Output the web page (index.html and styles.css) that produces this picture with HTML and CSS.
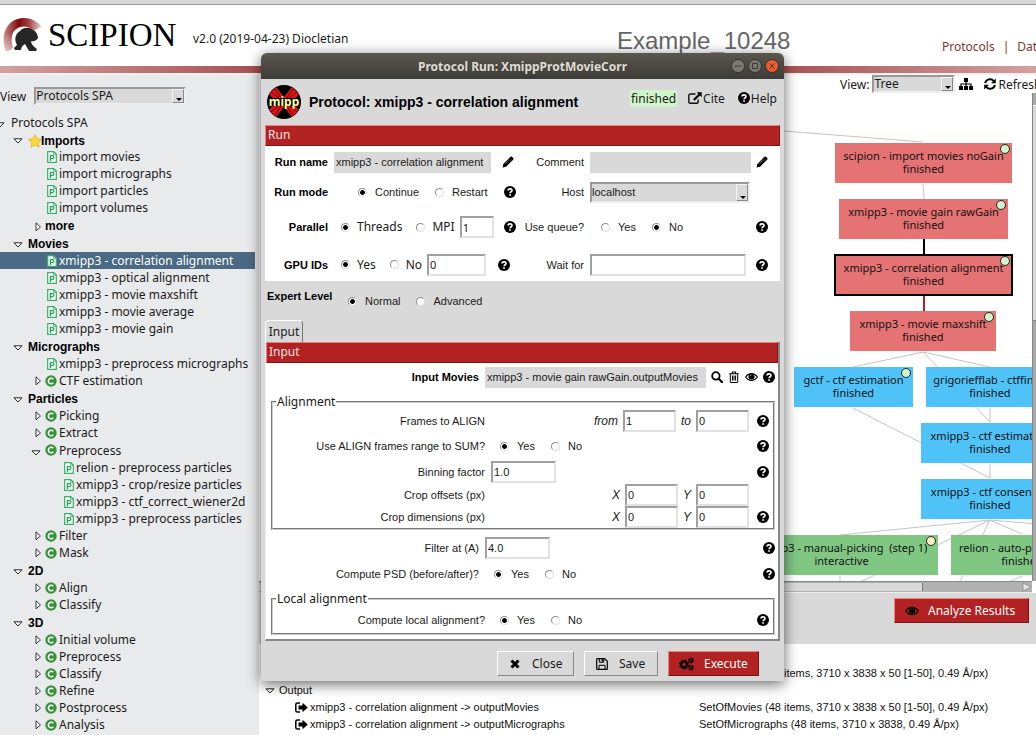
FILE: index.html
```html
<!DOCTYPE html>
<html lang="en">
<head>
<meta charset="utf-8">
<title>Scipion - Example_10248</title>
<link rel="stylesheet" href="styles.css">
</head>
<body>
<svg class="defs" aria-hidden="true">
  <defs>
    <linearGradient id="crest" x1="0" y1="0" x2="1" y2="0"><stop offset="0" stop-color="#c98a8a"/><stop offset=".4" stop-color="#7d0a0a"/><stop offset=".65" stop-color="#a03c3c"/><stop offset="1" stop-color="#ecd0d0"/></linearGradient>
    <linearGradient id="crestfade" x1="0" y1="0" x2="0" y2="1"><stop offset=".45" stop-color="#fff" stop-opacity="0"/><stop offset="1" stop-color="#fff" stop-opacity=".6"/></linearGradient>
    <symbol id="open" viewBox="0 0 10 6"><path d="M1 .8h8L5 5z" fill="#fff" stroke="#111" stroke-width=".9"/></symbol>
    <symbol id="closed" viewBox="0 0 7 10"><path d="M1 .8v8L5.5 5z" fill="#fff" stroke="#222" stroke-width=".9"/></symbol>
    <symbol id="proto" viewBox="0 0 10 12"><path d="M.7.7h6L9.3 3v8.3H.7z" fill="#fff" stroke="#35b068" stroke-width="1.2"/><path d="M6.4.8v2.6h2.8" fill="none" stroke="#35b068" stroke-width=".8"/><path d="M3.4 10V4.6h2a1.5 1.5 0 0 1 0 3H3.6" fill="none" stroke="#1fa457" stroke-width="1.3"/></symbol>
    <symbol id="cat" viewBox="0 0 12 12"><circle cx="6" cy="6" r="5.7" fill="#35943a"/><path d="M8.2 4.3A2.7 2.7 0 1 0 8.2 7.7" fill="none" stroke="#fff" stroke-width="1.6"/></symbol>
    <symbol id="star" viewBox="0 0 14 14"><path d="M7 .7l2 4.1 4.5.6-3.3 3.2.8 4.6L7 11l-4 2.2.8-4.6L.5 5.4 5 4.8z" fill="#fbd83a" stroke="#e0b21c" stroke-width=".8"/></symbol>
    <symbol id="help" viewBox="0 0 12 12"><circle cx="6" cy="6" r="6"/><path d="M4 4.5C4.1 2.3 8 2.3 8 4.4 8 5.8 6.1 5.7 6.1 7.3" fill="none" stroke="#fff" stroke-width="1.6"/><path d="M5.2 8.2h1.7v1.6H5.2z" fill="#fff"/></symbol>
    <symbol id="pencil" viewBox="0 0 13 13"><path d="M.6 12.4l.8-3.8 6-6 3 3-6 6zM8.200 1.800l1-1c.5-.5 1-.5 1.500 0l1.500 1.500c.5.5.5 1 0 1.500l-1 1z"/><path d="M7.400 2.600l1-1 3 3-1 1z"/><path d="M3.600 8.600l4-4" stroke="#fff" stroke-width=".5"/></symbol>
    <symbol id="search" viewBox="0 0 13 13"><circle cx="5.3" cy="5.3" r="4" fill="none" stroke="#000" stroke-width="2"/><path d="M8.3 8.3l3.6 3.6" stroke="#000" stroke-width="2.4" stroke-linecap="round"/></symbol>
    <symbol id="trash" viewBox="0 0 12 13"><path d="M1 3h10M4.2 2.8V1.2h3.6v1.6M2 3v8.7c0 .4.3.7.7.7h6.6c.4 0 .7-.3.7-.7V3M4.3 5v5.3M6 5v5.3M7.7 5v5.3" fill="none" stroke="#000" stroke-width="1.1"/></symbol>
    <symbol id="eye" viewBox="0 0 14 10"><path d="M.7 5C3.8.2 10.2.2 13.3 5 10.200 9.800 3.800 9.800.7 5z" fill="#fff" stroke="#000" stroke-width="1.300"/><circle cx="7" cy="4.500" r="3.300"/><path d="M5.400 4.200c0-1 .7-1.500 1.600-1.500" fill="none" stroke="#ddd" stroke-width=".7"/></symbol>
    <symbol id="eyered" viewBox="0 0 14 10"><path d="M.7 5C3.8.2 10.2.2 13.3 5 10.200 9.800 3.800 9.800.7 5z" fill="#b22222" stroke="#000" stroke-width="1.300"/><circle cx="7" cy="4.500" r="3.300"/><path d="M5.400 4.200c0-1 .7-1.500 1.600-1.500" fill="none" stroke="#b22222" stroke-width=".7"/></symbol>
    <symbol id="cite" viewBox="0 0 14 12"><path d="M7.500 2H2.600C1.500 2 .8 2.700.8 3.800v5.600c0 1.100.7 1.800 1.800 1.800h5.800c1.100 0 1.800-.7 1.800-1.800V7.500" fill="none" stroke="#111" stroke-width="1.400"/><path d="M8.700.3h5v5l-1.700-1.700-5.400 5.200-1.500-1.500L10.400 2z"/></symbol>
    <symbol id="sitemap" viewBox="0 0 14 12"><path d="M5 0h4v4H5zM0 8h4v4H0zM5 8h4v4H5zM10 8h4v4h-4z"/><path d="M7 4v4M2 8V6h10v2" fill="none" stroke="#000" stroke-width="1.200"/></symbol>
    <symbol id="refresh" viewBox="0 0 12 12"><path d="M1.200 5.200A4.800 4.800 0 0 1 9.600 2.900M10.800 6.800A4.800 4.800 0 0 1 2.400 9.100" fill="none" stroke="#000" stroke-width="2"/><path d="M11.800.4v4.800H7zM.2 11.600V6.800H5z"/></symbol>
    <symbol id="out" viewBox="0 0 13 11"><path d="M5 1H2.500C1.500 1 .8 1.700.8 2.600v5.800C.8 9.300 1.500 10 2.500 10H5" fill="none" stroke="#000" stroke-width="1.500"/><path d="M3.500 3.600h4V.8l5.300 4.700-5.300 4.700V7.400h-4z"/></symbol>
    <symbol id="times" viewBox="0 0 10 10"><path d="M1.500 1.500l7 7M8.500 1.500l-7 7" stroke="#000" stroke-width="3"/></symbol>
    <symbol id="save" viewBox="0 0 12 12"><path d="M.7 1.300c0-.4.200-.6.600-.6h7.400l2.600 2.600v7.400c0 .4-.2.600-.6.600H1.300c-.4 0-.6-.2-.6-.6z" fill="none" stroke="#000" stroke-width="1.200"/><path d="M3 11V7.300h6V11M3.300 1v3.200h4.500V1" fill="none" stroke="#000"/><path d="M5.500 1.200h1.600v2.200H5.500z"/></symbol>
    <symbol id="cogs" viewBox="0 0 15 14"><circle cx="5" cy="7.500" r="2.900" fill="none" stroke="#000" stroke-width="2.200"/><circle cx="5" cy="7.500" r="4.400" fill="none" stroke="#000" stroke-width="1.400" stroke-dasharray="1.800 1.650"/><circle cx="12" cy="3.400" r="1.600" fill="none" stroke="#000" stroke-width="1.500"/><circle cx="12" cy="3.400" r="2.600" fill="none" stroke="#000" stroke-width=".9" stroke-dasharray="1.300 1.400"/><circle cx="12" cy="10.800" r="1.600" fill="none" stroke="#000" stroke-width="1.500"/><circle cx="12" cy="10.800" r="2.600" fill="none" stroke="#000" stroke-width=".9" stroke-dasharray="1.300 1.400"/></symbol>
  </defs>
</svg>

<header class="top">
  <svg class="logo" viewBox="0 0 40 34"><path d="M4 33.500C-3 16 6 0 22 0c7 0 13 3 17.500 8.500L32 12.500C23 5 13 9 10.500 16 9 21 9.500 26 11 30z" fill="url(#crest)"/><path d="M4 33.500C-3 16 6 0 22 0c7 0 13 3 17.500 8.500L32 12.500C23 5 13 9 10.500 16 9 21 9.500 26 11 30z" fill="url(#crestfade)"/><path d="M12 30l3-3c-3-5-2-11 3-14 3-4 11-4 13-1 3 1 5 5 5 8-1 2-4 4-7 3 0 3 2 5 6 8l-1 2h-7l-4-7c-2 1-4 3-4 6h-6z" fill="#262626"/></svg>
  <span class="brand">SCIPION</span>
  <span class="version">v2.0 (2019-04-23) Diocletian</span>
  <h1 class="project">Example_10248</h1>
  <nav class="tabs"><a href="#protocols">Protocols</a><span>|</span><a href="#data">Data</a></nav>
</header>
<div class="stripe"></div>

<div class="workspace">
  <aside class="side">
    <div class="viewrow"><label for="view">View</label>
      <span class="combo"><select id="view"><option>Protocols SPA</option></select></span></div>
    <ul class="tree">
      <li class="root"><svg class="tri"><use href="#open"/></svg>Protocols SPA</li>
      <li class="group first"><svg class="tri"><use href="#open"/></svg><svg class="star"><use href="#star"/></svg>Imports</li>
      <li class="leaf"><svg class="doc"><use href="#proto"/></svg>import movies</li>
      <li class="leaf"><svg class="doc"><use href="#proto"/></svg>import micrographs</li>
      <li class="leaf"><svg class="doc"><use href="#proto"/></svg>import particles</li>
      <li class="leaf"><svg class="doc"><use href="#proto"/></svg>import volumes</li>
      <li class="group more"><svg class="right"><use href="#closed"/></svg>more</li>
      <li class="group"><svg class="tri"><use href="#open"/></svg>Movies</li>
      <li class="leaf selected"><svg class="doc"><use href="#proto"/></svg>xmipp3 - correlation alignment</li>
      <li class="leaf"><svg class="doc"><use href="#proto"/></svg>xmipp3 - optical alignment</li>
      <li class="leaf"><svg class="doc"><use href="#proto"/></svg>xmipp3 - movie maxshift</li>
      <li class="leaf"><svg class="doc"><use href="#proto"/></svg>xmipp3 - movie average</li>
      <li class="leaf"><svg class="doc"><use href="#proto"/></svg>xmipp3 - movie gain</li>
      <li class="group"><svg class="tri"><use href="#open"/></svg>Micrographs</li>
      <li class="leaf"><svg class="doc"><use href="#proto"/></svg>xmipp3 - preprocess micrographs</li>
      <li class="cat"><svg class="right"><use href="#closed"/></svg><svg class="c"><use href="#cat"/></svg>CTF estimation</li>
      <li class="group"><svg class="tri"><use href="#open"/></svg>Particles</li>
      <li class="cat"><svg class="right"><use href="#closed"/></svg><svg class="c"><use href="#cat"/></svg>Picking</li>
      <li class="cat"><svg class="right"><use href="#closed"/></svg><svg class="c"><use href="#cat"/></svg>Extract</li>
      <li class="cat expanded"><svg class="tri"><use href="#open"/></svg><svg class="c"><use href="#cat"/></svg>Preprocess</li>
      <li class="leaf deep"><svg class="doc"><use href="#proto"/></svg>relion - preprocess particles</li>
      <li class="leaf deep"><svg class="doc"><use href="#proto"/></svg>xmipp3 - crop/resize particles</li>
      <li class="leaf deep"><svg class="doc"><use href="#proto"/></svg>xmipp3 - ctf_correct_wiener2d</li>
      <li class="leaf deep"><svg class="doc"><use href="#proto"/></svg>xmipp3 - preprocess particles</li>
      <li class="cat"><svg class="right"><use href="#closed"/></svg><svg class="c"><use href="#cat"/></svg>Filter</li>
      <li class="cat"><svg class="right"><use href="#closed"/></svg><svg class="c"><use href="#cat"/></svg>Mask</li>
      <li class="group"><svg class="tri"><use href="#open"/></svg>2D</li>
      <li class="cat"><svg class="right"><use href="#closed"/></svg><svg class="c"><use href="#cat"/></svg>Align</li>
      <li class="cat"><svg class="right"><use href="#closed"/></svg><svg class="c"><use href="#cat"/></svg>Classify</li>
      <li class="group"><svg class="tri"><use href="#open"/></svg>3D</li>
      <li class="cat"><svg class="right"><use href="#closed"/></svg><svg class="c"><use href="#cat"/></svg>Initial volume</li>
      <li class="cat"><svg class="right"><use href="#closed"/></svg><svg class="c"><use href="#cat"/></svg>Preprocess</li>
      <li class="cat"><svg class="right"><use href="#closed"/></svg><svg class="c"><use href="#cat"/></svg>Classify</li>
      <li class="cat"><svg class="right"><use href="#closed"/></svg><svg class="c"><use href="#cat"/></svg>Refine</li>
      <li class="cat"><svg class="right"><use href="#closed"/></svg><svg class="c"><use href="#cat"/></svg>Postprocess</li>
      <li class="cat"><svg class="right"><use href="#closed"/></svg><svg class="c"><use href="#cat"/></svg>Analysis</li>
    </ul>
  </aside>

  <main class="main">
    <div class="toolbar">
      <label for="mode">View:</label>
      <span class="combo small"><select id="mode"><option>Tree</option></select></span>
      <svg class="site"><use href="#sitemap"/></svg>
      <a class="refresh" href="#refresh"><svg class="ref"><use href="#refresh"/></svg>Refresh</a>
    </div>
    <div class="graphrow">
      <div class="graph">
        <svg class="edges"><g fill="none" stroke="#c4c4c4"><path d="M441 32L525 38 664 49M664 90L665 106M664 259L594 274M664 259L731 329M664 259L731 274M594 315L731 385M731 315V329M731 371V385M731 427L581 442M731 427L595 492M731 427L699 492M731 427L763 441M731 427L790 432M581 483V492M763 483L744 492"/></g><path d="M665 146V162" stroke="#000" stroke-width="2"/><path d="M665 202V218" stroke="#b22222" stroke-width="2"/></svg>
        <div class="node n1">scipion - import movies noGain<br>finished<i></i></div>
        <div class="node n2">xmipp3 - movie gain rawGain<br>finished<i></i></div>
        <div class="node n3">xmipp3 - correlation alignment<br>finished<i></i></div>
        <div class="node n4">xmipp3 - movie maxshift<br>finished<i></i></div>
        <div class="node ctf n5">gctf - ctf estimation<br>finished<i></i></div>
        <div class="node ctf n6">grigoriefflab - ctffind4<br>finished</div>
        <div class="node ctf n7">xmipp3 - ctf estimation<br>finished</div>
        <div class="node ctf n8">xmipp3 - ctf consensus<br>finished</div>
        <div class="node pick n9">xmipp3 - manual-picking&nbsp; (step 1)<br>interactive<i class="pending"></i></div>
        <div class="node pick n10"><span>relion - auto-picking</span>finished</div>
      </div>
      <div class="vscroll"><b></b></div>
    </div>
    <div class="hscroll"><b></b><svg viewBox="0 0 10 10"><path d="M1 1l8 4-8 4z" fill="#e4e4e4" stroke="#888" stroke-width=".8"/></svg></div>
    <div class="actions"><button class="btn red analyze" type="button"><svg class="eye"><use href="#eyered"/></svg>Analyze Results</button></div>
    <div class="output">
      <span></span><span>SetOfMovies (48 items, 3710 x 3838 x 50 [1-50], 0.49 Å/px)</span>
      <span class="outhead"><svg class="tri"><use href="#open"/></svg>Output</span><span></span>
      <span class="item"><svg class="arrow"><use href="#out"/></svg>xmipp3 - correlation alignment -&gt; outputMovies</span><span>SetOfMovies (48 items, 3710 x 3838 x 50 [1-50], 0.49 Å/px)</span>
      <span class="item"><svg class="arrow"><use href="#out"/></svg>xmipp3 - correlation alignment -&gt; outputMicrographs</span><span>SetOfMicrographs (48 items, 3710 x 3838, 0.49 Å/px)</span>
    </div>
  </main>
</div>

<form class="dialog" role="dialog" aria-label="Protocol Run">
  <div class="titlebar"><span>Protocol Run: XmippProtMovieCorr</span>
    <div class="wm"><button type="button" aria-label="Minimize"><svg viewBox="0 0 14 14"><path d="M3 7h8"/></svg></button><button type="button" aria-label="Maximize"><svg viewBox="0 0 14 14"><path d="M4 4h6v6H4z"/></svg></button><button class="x" type="button" aria-label="Close window"><svg viewBox="0 0 14 14"><path d="M4 4l6 6M10 4l-6 6"/></svg></button></div>
  </div>
  <div class="heading">
    <svg class="mipp" viewBox="0 0 34 34"><circle cx="17" cy="17" r="17"/><path d="M9 2L17 12 25 2 32 9 25 17 32 25 25 32 17 22 9 32 2 25 9 17 2 9z" fill="#d4141a"/><path d="M4 7l26 20M30 7L4 27M8 4l18 26M26 4L8 30" stroke="#7a0000" stroke-width="1"/><path d="M1 13h32v8H1z"/><text x="17" y="21" text-anchor="middle">mipp</text></svg>
    <h2>Protocol: xmipp3 - correlation alignment</h2>
    <span class="status">finished</span>
    <a class="cite" href="#cite"><svg><use href="#cite"/></svg>Cite</a>
    <a class="helplink" href="#help"><svg><use href="#help"/></svg>Help</a>
  </div>

  <div class="bar">Run</div>
  <div class="run">
    <div class="rrow name"><label class="b" for="rn">Run name</label><div class="cell near"><input id="rn" class="flat" value="xmipp3 - correlation alignment"><svg class="pen"><use href="#pencil"/></svg></div><label for="cm">Comment</label><div class="cell"><input id="cm" class="flat wide"><svg class="pen"><use href="#pencil"/></svg></div></div>
    <div class="rrow mode"><span class="b">Run mode</span><div class="cell ind2"><label class="r"><input type="radio" name="rm" checked>Continue</label><label class="r"><input type="radio" name="rm">Restart</label><svg class="q"><use href="#help"/></svg></div><label for="host">Host</label><div class="cell"><span class="combo host"><select id="host"><option>localhost</option></select></span></div></div>
    <div class="rrow par"><span class="b">Parallel</span><div class="cell ind ui"><label class="r"><input type="radio" name="pa" checked>Threads</label><label class="r"><input type="radio" name="pa">MPI</label><input class="box w34" aria-label="Threads" value="1"><svg class="q"><use href="#help"/></svg></div><span>Use queue?</span><div class="cell ind3"><label class="r"><input type="radio" name="uq">Yes</label><label class="r"><input type="radio" name="uq" checked>No</label><svg class="q"><use href="#help"/></svg></div></div>
    <div class="rrow gpu"><span class="b">GPU IDs</span><div class="cell ind ui far"><label class="r"><input type="radio" name="gp" checked>Yes</label><label class="r"><input type="radio" name="gp">No</label><input class="box w59" aria-label="GPU IDs" value="0"><svg class="q"><use href="#help"/></svg></div><label for="wf">Wait for</label><div class="cell"><input id="wf" class="box w156"><svg class="q"><use href="#help"/></svg></div></div>
  </div>

  <div class="expert"><b>Expert Level</b><label class="r"><input type="radio" name="ex" checked>Normal</label><label class="r"><input type="radio" name="ex">Advanced</label></div>

  <button class="tab" type="button">Input</button>
  <div class="panel">
    <div class="bar">Input</div>
    <div class="prow movies"><label class="b" for="im">Input Movies</label><div class="cell"><input id="im" class="flat mov" value="xmipp3 - movie gain rawGain.outputMovies"><svg class="s12"><use href="#search"/></svg><svg class="s12"><use href="#trash"/></svg><svg class="eyei"><use href="#eye"/></svg><svg class="s12"><use href="#help"/></svg></div></div>
    <fieldset>
      <legend>Alignment</legend>
      <div class="prow r22"><span>Frames to ALIGN</span><div class="cell"><div class="pair"><label for="ff">from</label><input id="ff" class="box w53" value="1"><label for="ft">to</label><input id="ft" class="box w53" value="0"></div><svg class="q"><use href="#help"/></svg></div></div>
      <div class="prow r28"><span>Use ALIGN frames range to SUM?</span><div class="cell ind"><label class="r"><input type="radio" name="us" checked>Yes</label><label class="r"><input type="radio" name="us">No</label><svg class="q"><use href="#help"/></svg></div></div>
      <div class="prow r24"><label for="bf">Binning factor</label><div class="cell"><input id="bf" class="box w65" value="1.0"><svg class="q"><use href="#help"/></svg></div></div>
      <div class="prow r22"><span>Crop offsets (px)</span><div class="cell"><div class="pair nohelp"><label for="ox">X</label><input id="ox" class="box w53" value="0"><label for="oy">Y</label><input id="oy" class="box w53" value="0"></div></div></div>
      <div class="prow r22"><span>Crop dimensions (px)</span><div class="cell"><div class="pair"><label for="dx">X</label><input id="dx" class="box w53" value="0"><label for="dy">Y</label><input id="dy" class="box w53" value="0"></div><svg class="q"><use href="#help"/></svg></div></div>
    </fieldset>
    <div class="prow mid"><label for="fa">Filter at (A)</label><div class="cell"><input id="fa" class="box w65" value="4.0"><svg class="q"><use href="#help"/></svg></div></div>
    <div class="prow mid low"><span>Compute PSD (before/after)?</span><div class="cell ind"><label class="r"><input type="radio" name="ps" checked>Yes</label><label class="r"><input type="radio" name="ps">No</label><svg class="q"><use href="#help"/></svg></div></div>
    <fieldset class="local">
      <legend>Local alignment</legend>
      <div class="prow r26"><span>Compute local alignment?</span><div class="cell ind"><label class="r"><input type="radio" name="la" checked>Yes</label><label class="r"><input type="radio" name="la">No</label><svg class="q"><use href="#help"/></svg></div></div>
    </fieldset>
  </div>
  <div class="buttons"><button class="btn close" type="button"><svg class="s10"><use href="#times"/></svg>Close</button><button class="btn save" type="button"><svg class="s12"><use href="#save"/></svg>Save</button><button class="btn red exec" type="button"><svg class="cogs"><use href="#cogs"/></svg>Execute</button></div>
</form>
</body>
</html>
```

FILE: styles.css
```css
* { box-sizing: border-box; }
body { margin: 0; height: 100vh; display: flex; flex-direction: column; overflow: hidden; position: relative; background: #fff; color: #1a1a1a; font: 12px/17px "Noto Sans", "DejaVu Sans", sans-serif; }
svg { flex: none; display: block; }
a { color: inherit; text-decoration: none; }
input, select, button { font: inherit; color: inherit; margin: 0; }
.defs { position: absolute; width: 0; height: 0; }

/* header */
.top { height: 66px; flex: none; display: flex; align-items: center; border-top: 4px solid #d9d9d9; box-shadow: inset 0 1px #999; padding-left: 2px; white-space: nowrap; overflow: hidden; }
.top > * { flex: none; }
.logo { width: 40px; height: 34px; }
.brand { font: 33px/36px "Liberation Serif", serif; color: #000; margin-left: 6px; width: 145px; }
.version { width: 424px; padding-top: 6px; }
.project { font: 24px/28px "Liberation Sans", sans-serif; color: #666; margin: 0; width: 325px; padding-top: 11px; }
.tabs { display: flex; gap: 8px; color: #7c3535; padding-top: 22px; }
.stripe { height: 9px; flex: none; border-bottom: 2px solid #f2f2f2; background: linear-gradient(90deg, #d3a0a0, #7a0000 50%, #d3a0a0); }

.workspace { flex: 1; min-height: 0; display: flex; }

/* protocol tree */
.side { width: 259px; flex: none; background: #e9eaec; overflow: hidden; }
.viewrow { display: flex; align-items: center; gap: 8px; height: 18px; margin-top: 12px; }
.combo { display: flex; position: relative; width: 152px; height: 18px; }
.combo select { appearance: none; flex: 1; min-width: 0; border: 2px solid; border-color: #999 #eee #eee #999; border-radius: 0; background: #d9d9d9; padding: 0; line-height: 14px; }
.combo::after { content: ""; position: absolute; right: 2px; top: 2px; bottom: 2px; width: 10px; border: 1px solid; border-color: #f4f4f4 #888 #888 #f4f4f4; background: #d9d9d9; pointer-events: none; }
.combo::before { content: ""; position: absolute; z-index: 1; right: 4px; bottom: 4px; border: 3px solid transparent; border-top-color: #000; border-bottom: 0; pointer-events: none; }
.tree { list-style: none; margin: 7px 0 0; padding: 0; }
.tree li { display: flex; align-items: center; height: 17px; white-space: nowrap; }
.tri { width: 10px; height: 6px; }
.right { width: 7px; height: 10px; }
.tree .root { height: 19px; padding-top: 1px; }
.root .tri { margin: 5px 6px 0 -5px; }
.tree .group { height: 18px; padding: 3px 0 0 13px; font: bold 12px/15px "Liberation Sans", sans-serif; color: #000; }
.tree .first { height: 17px; }
.group .tri { margin-right: 5px; }
.star { width: 14px; height: 14px; margin-right: -1px; }
.tree .more { padding-left: 35px; }
.more .right { margin-right: 3px; }
.tree .leaf { padding-left: 47px; }
.doc { width: 10px; height: 12px; margin-right: 2px; }
.tree .deep { padding-left: 64px; }
.tree .selected { background: #4a6984; color: #fff; margin-right: 4px; }
.tree .cat { padding-left: 35px; }
.c { width: 12px; height: 12px; margin: 0 2px 0 3px; }
.tree .expanded { height: 18px; padding-left: 31px; }
.expanded .c { margin-left: 4px; }
.expanded .tri { margin-top: 6px; }

/* graph */
.main { flex: 1; min-width: 0; display: flex; flex-direction: column; overflow: hidden; }
.toolbar { height: 18px; display: flex; align-items: center; padding-left: 581px; white-space: nowrap; }
.toolbar .combo { width: 83px; margin-left: 3px; flex: none; }
.site { width: 14px; height: 12px; margin: 0 11px 0 4px; }
.refresh { display: flex; align-items: center; gap: 2px; }
.ref { width: 12px; height: 12px; }
.graphrow { flex: 1; min-height: 0; display: flex; }
.graph { flex: 1; min-width: 0; position: relative; overflow: hidden; }
.edges { position: absolute; width: 100%; height: 100%; }
.node { position: absolute; height: 40px; padding-top: 6px; background: #e57373; text-align: center; white-space: nowrap; font-size: 11px; line-height: 13px; color: #111; }
.node i { position: absolute; top: 1px; right: 2px; width: 10px; height: 10px; border: 1px solid #222; border-radius: 50%; background: #d2f5cb; }
.node i.pending { background: #f8f0c4; }
.ctf { background: #4fc3f7; }
.pick { background: #81c784; }
.n1 { left: 576px; top: 50px; width: 177px; }
.n2 { left: 580px; top: 106px; width: 169px; }
.n3 { left: 576px; top: 162px; width: 177px; outline: 2px solid #000; outline-offset: -1px; }
.n4 { left: 591px; top: 218px; width: 146px; }
.n5 { left: 535px; top: 274px; width: 119px; }
.n6 { left: 667px; top: 274px; width: 128px; }
.n7 { left: 662px; top: 330px; width: 138px; }
.n8 { left: 662px; top: 386px; width: 138px; }
.n9 { left: 483px; top: 442px; width: 196px; padding-left: 3px; }
.n10 { left: 692px; top: 442px; width: 142px; }
.n10 span { display: block; text-align: left; padding-left: 8px; }
.vscroll { width: 4px; background: #a9a9a9; border-left: 1px solid #888; padding-top: 12px; }
.vscroll b { display: block; height: 216px; background: #d9d9d9; border-top: 1px solid #fff; border-bottom: 1px solid #888; }
.hscroll { height: 12px; margin-right: 4px; display: flex; align-items: center; background: #b1b1b1; border-top: 1px solid #888; border-bottom: 1px solid #eee; }
.hscroll b { width: 664px; height: 8px; background: #d9d9d9; border-right: 1px solid #777; }
.hscroll svg { width: 10px; height: 10px; margin-left: auto; }
.actions { height: 51px; padding: 5px 7px 0 0; background: #d9d9d9; }
.btn { display: flex; align-items: center; height: 25px; background: #d9d9d9; border: 1px solid; border-color: #fff #888 #888 #fff; border-radius: 0; padding: 0; }
.red { background: #b22222; color: #fff; border-color: #ee8080 #7a1414 #7a1414 #ee8080; }
.analyze { margin-left: auto; width: 135px; gap: 9px; padding-left: 10px; }
.eye { width: 14px; height: 10px; }
.output { height: 91px; display: grid; grid-template-columns: 434px 1fr; grid-auto-rows: 17px; align-content: end; padding: 0 6px 2px; color: #111; font: 11px/17px "Liberation Sans", sans-serif; white-space: nowrap; }
.output span { display: flex; align-items: center; }
.outhead .tri { margin-right: 4px; }
.item { padding-left: 30px; gap: 2px; }
.arrow { width: 13px; height: 11px; }

/* dialog window */
.dialog { position: absolute; left: 261px; top: 53px; width: 523px; background: #d9d9d9; border-radius: 6px 6px 0 0; box-shadow: 0 3px 14px rgba(0, 0, 0, .6); padding-bottom: 5px; }
.titlebar { height: 26px; display: flex; align-items: center; justify-content: center; position: relative; border-radius: 6px 6px 0 0; background: linear-gradient(#5a574e, #3d3b36); color: #dfdbd2; font-weight: 700; font-size: 12px; }
.wm { position: absolute; right: 5px; display: flex; gap: 3px; }
.wm button { width: 14px; height: 14px; padding: 0; border: 1px solid #33322d; border-radius: 50%; background: #7b7970; }
.wm .x { background: #ee5b2e; }
.wm svg { width: 12px; height: 12px; fill: none; stroke: #33322d; }
.heading { height: 46px; display: flex; align-items: center; padding-left: 6px; }
.mipp { width: 34px; height: 34px; }
.mipp text { font: bold 12px "Noto Sans", sans-serif; fill: #ffffa0; }
.heading h2 { margin: 0; width: 329px; flex: none; padding: 0 0 0 8px; font: bold 14px/18px "Liberation Sans", sans-serif; color: #000; white-space: nowrap; }
.status { background: #cff5cb; padding: 0 1px; margin-bottom: 8px; }
.cite, .helplink { display: flex; align-items: center; gap: 1px; margin: 0 0 8px 11px; }
.cite svg { width: 14px; height: 12px; }
.helplink { margin-left: 13px; }
.helplink svg { width: 12px; height: 12px; }
.bar { margin: 0 4px; height: 21px; padding-left: 2px; line-height: 18px; background: #b22222; color: #f4e4e4; border: 1px solid; border-color: #f08080 #801616 #801616 #f08080; }
.run { margin: 0 4px; background: #fff; font: 11px/14px "Liberation Sans", sans-serif; }
.rrow { display: grid; grid-template-columns: 63px 182px 62px 182px; column-gap: 6px; align-items: center; height: 32px; }
.rrow > :nth-child(odd) { text-align: right; white-space: nowrap; }
.mode { height: 28px; }
.par { height: 42px; }
.gpu { height: 33px; }
.b { font-weight: bold; color: #000; }
.cell { display: flex; align-items: center; }
.ui { font: 12px/16px "Noto Sans", sans-serif; }
.ind { padding-left: 9px; }
.ind2 { padding-left: 24px; }
.ind3 { padding-left: 11px; }
.near { padding-right: 2px; }
.far { padding-right: 6px; }
.r { display: flex; align-items: center; gap: 8px; margin-right: 16px; }
.rrow .ui { padding-left: 7px; }
.ui .r { gap: 7px; margin-right: 14px; }
.ui .r + .r { margin-right: 5px; }
.r input { appearance: none; width: 9px; height: 9px; border: 1px solid; border-color: #909090 #ddd #ddd #909090; border-radius: 50%; background: #fff; }
.r input:checked { background: radial-gradient(#000 42%, #fff 52%); }
.flat { border: 0; background: #d9d9d9; height: 21px; width: 157px; padding: 0 2px; }
.wide { width: 161px; }
.pen { width: 12px; height: 12px; margin-left: auto; }
.q { width: 12px; height: 12px; margin-left: auto; }
.rrow > :nth-child(4) .q, .rrow > :nth-child(4) .pen { margin-right: 4px; }
.combo.host { width: 160px; height: 21px; }
.host select { line-height: 17px; }
.box { border: 2px solid; border-color: #a0a0a0 #e2e2e2 #e2e2e2 #a0a0a0; background: #fff; height: 22px; padding: 0 1px; font-size: 11px; border-radius: 0; }
.w34 { width: 34px; }
.w59 { width: 59px; }
.w156 { width: 156px; }
.w65 { width: 65px; }
.w53 { width: 53px; }
.expert { height: 39px; padding: 1px 6px 0; display: flex; align-items: center; font: 11px/14px "Liberation Sans", sans-serif; }
.expert b { width: 81px; margin-bottom: 10px; color: #000; }
.tab { display: block; margin-left: 4px; height: 22px; width: 38px; padding: 0; background: #d9d9d9; border: 1px solid; border-color: #fff #777 #d9d9d9 #fff; border-bottom: 0; border-radius: 4px 4px 0 0; line-height: 16px; }
.panel { margin: 0 4px; background: #fff; border-right: 2px solid #888; border-bottom: 2px solid #888; border-left: 1px solid #eee; font: 11px/14px "Liberation Sans", sans-serif; padding-bottom: 4px; }
.panel .bar { margin: 0; font: 12px/18px "Noto Sans", sans-serif; }
.prow { display: grid; grid-template-columns: 212px 1fr; column-gap: 6px; align-items: center; white-space: nowrap; }
.prow > :first-child { text-align: right; }
.movies { height: 28px; padding-right: 3px; grid-template-columns: 213px 1fr; }
.movies .cell { gap: 5px; }
.mov { flex: 1; min-width: 0; }
.s12 { width: 12px; height: 12px; }
.s10 { width: 10px; height: 10px; }
.eyei { width: 13px; height: 10px; }
fieldset { margin: 3px 3px 0 5px; padding: 0 4px 0 0; border: 2px groove #ccc; min-width: 0; }
fieldset.local { margin-top: 4px; }
legend { font: 12px/16px "Noto Sans", sans-serif; margin-left: 3px; padding: 0 1px; }
.r28 { height: 28px; }
.r26 { height: 26px; }
.r24 { height: 24px; }
.r22 { height: 22px; }
.pair { margin-left: auto; display: flex; align-items: center; gap: 5px; margin-right: 8px; font: italic 12px/14px "Liberation Sans", sans-serif; }
.pair input { font-style: normal; }
.pair + .q { margin-left: 0; }
.nohelp { margin-right: 20px; }
.mid { height: 26px; padding-right: 3px; grid-template-columns: 213px 1fr; margin-top: 5px; }
.low { margin-top: 0; }
.buttons { height: 25px; margin-top: 10px; padding-right: 25px; display: flex; justify-content: flex-end; gap: 10px; }
.close { width: 77px; gap: 12px; padding-left: 12px; }
.save { width: 74px; gap: 11px; padding-left: 11px; }
.exec { width: 91px; gap: 10px; padding-left: 10px; }
.cogs { width: 15px; height: 14px; }
```
